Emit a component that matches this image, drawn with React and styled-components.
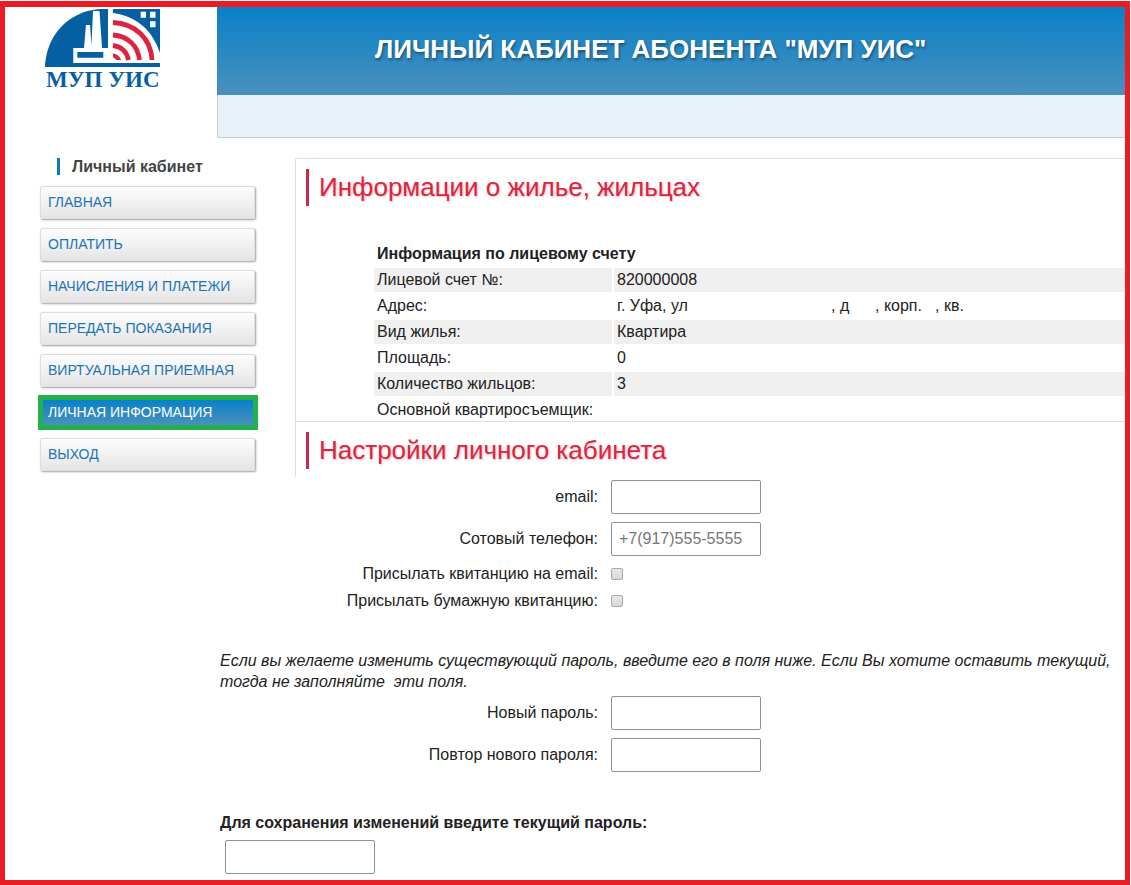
import React from "react";
import styled, { createGlobalStyle } from "styled-components";

const menu = [
  "Главная",
  "Оплатить",
  "Начисления и платежи",
  "Передать показания",
  "Виртуальная приемная",
  "Личная информация",
  "Выход",
];

const account = [
  ["Лицевой счет №:", "820000008"],
  ["Адрес:", ["г. Уфа, ул", ", д", ", корп.", ", кв."]],
  ["Вид жилья:", "Квартира"],
  ["Площадь:", "0"],
  ["Количество жильцов:", "3"],
  ["Основной квартиросъемщик:", ""],
];

function Logo() {
  return (
    <LogoImage viewBox="0 0 120 84" role="img" aria-label="МУП УИС">
      <path fill="#0560a2" d="M0 58C1 26 24 2 55 0h8v58z" />
      <path fill="#0560a2" d="M68 0h47v44C108 22 92 7 68 4z" />
      <path fill="#0560a2" d="M0 54h115v4H0z" />
      <path
        fill="#fff"
        d="M28.300 54V39H39l2-23h4l1.500 20L48 2h6.500l2.500 37h6v15zM32.300 43v5.700h26V43z"
        fillRule="evenodd"
      />
      <path
        fill="#fff"
        d="M63 0h5v54h-5zM95.700 2.700h5.300v6h-5.300zM105 2.700h5.500v6H105zM105 12.300h5.500v6H105z"
      />
      <g fill="none" stroke="#dc2440" strokeWidth="4.800">
        <path d="M68 13.500c22 1 38 16 39 37.500" />
        <path d="M68 26c15 1 25 11 26.500 25" />
        <path d="M68 36.500c8 1 14 6 15.500 14.500" />
      </g>
      <path fill="#dc2440" d="M68 44.500c4 .5 7 3 8 6.500h-4.500L68 48z" />
      <text x="1" y="78">
        МУП УИС
      </text>
    </LogoImage>
  );
}

function App() {
  return (
    <Frame>
      <GlobalStyle />
      <Header>
        <LogoCell>
          <Logo />
        </LogoCell>
        <Banner>
          <BannerTitle>ЛИЧНЫЙ КАБИНЕТ АБОНЕНТА "МУП УИС"</BannerTitle>
          <SubBar />
        </Banner>
      </Header>
      <Columns>
        <Sidebar>
          <SidebarTitle>Личный кабинет</SidebarTitle>
          {menu.map((item) => (
            <MenuLink href="#" key={item} $active={item === "Личная информация"}>
              {item}
            </MenuLink>
          ))}
        </Sidebar>
        <Content>
          <Panel>
            <PanelTitle>Информации о жилье, жильцах</PanelTitle>
            <AccountTable>
              <thead>
                <tr>
                  <th colSpan="2">Информация по лицевому счету</th>
                </tr>
              </thead>
              <tbody>
                {account.map(([name, value]) => (
                  <tr key={name}>
                    <td>{name}</td>
                    <td>
                      {Array.isArray(value) ? (
                        <Address>
                          {value.map((part) => (
                            <span key={part}>{part}</span>
                          ))}
                        </Address>
                      ) : (
                        value
                      )}
                    </td>
                  </tr>
                ))}
              </tbody>
            </AccountTable>
          </Panel>
          <Panel>
            <PanelTitle>Настройки личного кабинета</PanelTitle>
          </Panel>
        </Content>
      </Columns>
      <Form>
        <Field>
          <label htmlFor="email">email:</label>
          <Input id="email" type="text" />
        </Field>
        <Field>
          <label htmlFor="phone">Сотовый телефон:</label>
          <Input id="phone" type="text" placeholder="+7(917)555-5555" />
        </Field>
        <Checks>
          <CheckField>
            <label htmlFor="byEmail">Присылать квитанцию на email:</label>
            <Checkbox id="byEmail" />
          </CheckField>
          <CheckField>
            <label htmlFor="byPaper">Присылать бумажную квитанцию:</label>
            <Checkbox id="byPaper" />
          </CheckField>
        </Checks>
        <Note>
          Если вы желаете изменить существующий пароль, введите его в поля ниже.
          Если Вы хотите оставить текущий, тогда не заполняйте&nbsp; эти поля.
        </Note>
        <Field>
          <label htmlFor="newPassword">Новый пароль:</label>
          <Input id="newPassword" type="password" />
        </Field>
        <Field>
          <label htmlFor="repeatPassword">Повтор нового пароля:</label>
          <Input id="repeatPassword" type="password" />
        </Field>
        <Current>
          <label htmlFor="currentPassword">
            Для сохранения изменений введите текущий пароль:
          </label>
          <Input id="currentPassword" type="password" />
        </Current>
      </Form>
    </Frame>
  );
}

export default App;

const GlobalStyle = createGlobalStyle`
  * {
    box-sizing: border-box;
  }

  body {
    margin: 0;
    background: #fff;
    color: #222;
    font: 16px/20px "Liberation Sans", Arial, sans-serif;
  }
`;

const Frame = styled.div`
  margin: 1px 1px 0 0;
  border: 5px solid #ec1c24;
  border-top-width: 6px;
`;

const Header = styled.header`
  display: flex;
`;

const LogoCell = styled.div`
  width: 212px;
  flex-shrink: 0;
  padding: 2px 0 0 40px;
`;

const LogoImage = styled.svg`
  display: block;
  width: 120px;
  height: 84px;

  text {
    fill: #0560a2;
    font: bold 23px "Liberation Serif", serif;
  }
`;

const Banner = styled.div`
  flex: 1;
`;

const BannerTitle = styled.h1`
  margin: 0;
  padding-left: 158px;
  background: linear-gradient(#0881c8, #4a90bd);
  color: #fff;
  font-size: 26px;
  line-height: 84px;
  height: 88px;
  text-shadow: 1px 2px 3px rgba(0, 0, 0, 0.4);
`;

const SubBar = styled.div`
  height: 43px;
  border: solid #c3ced4;
  border-width: 0 0 1px 1px;
  border-bottom-left-radius: 2px;
  background: #e9f1f8;
`;

const Columns = styled.div`
  display: flex;
  padding: 20px 0 0 35px;
`;

const Sidebar = styled.nav`
  width: 215px;
  flex-shrink: 0;
  margin-right: 40px;
`;

const SidebarTitle = styled.h2`
  margin: 0 0 11px 17px;
  padding-left: 12px;
  border-left: 3px solid #0f7bbd;
  color: #444;
  font-size: 16px;
  line-height: 17px;
`;

const MenuLink = styled.a`
  display: block;
  height: ${(p) => (p.$active ? "35px" : "33px")};
  margin: ${(p) => (p.$active ? "-1px -3px 8px -2px" : "0 0 9px")};
  padding-left: ${(p) => (p.$active ? "5px" : "7px")};
  border: ${(p) => (p.$active ? "5px solid #22b14c" : "1px solid #dedede")};
  border-radius: ${(p) => (p.$active ? "0" : "2px")};
  background: ${(p) =>
    p.$active
      ? "linear-gradient(#0881c8, #4a90bd)"
      : "linear-gradient(#fdfdfd, #e6e5e6)"};
  box-shadow: ${(p) => (p.$active ? "none" : "1px 1px 2px rgba(80, 60, 70, 0.5)")};
  color: ${(p) => (p.$active ? "#fff" : "#1b74b5")};
  font-size: 14px;
  line-height: ${(p) => (p.$active ? "25px" : "31px")};
  text-decoration: none;
  text-transform: uppercase;
`;

const Content = styled.main`
  flex: 1;
  min-width: 0;
`;

const Panel = styled.section`
  margin-bottom: 2px;
  padding: 10px 0 0 10px;
  border: solid #dfdfdf;
  border-width: 1px 0 0 1px;
  border-top-left-radius: 2px;

  &:last-child {
    margin-bottom: 0;
    padding-bottom: 8px;
  }
`;

const PanelTitle = styled.h2`
  margin: 0;
  padding-left: 10px;
  border-left: 3px solid #cc2945;
  color: #dc2440;
  font-size: 26px;
  font-weight: normal;
  line-height: 37px;
  text-shadow: 1px 1px 2px rgba(200, 40, 70, 0.3);
`;

const AccountTable = styled.table`
  width: calc(100% - 64px);
  margin: 34px 0 -5px 66px;
  border-spacing: 2px;

  th,
  td {
    height: 24px;
    padding: 2px 3px;
    text-align: left;
  }

  td:first-child {
    width: 238px;
  }

  tbody tr:nth-child(odd) td {
    background: #f0f0f0;
  }
`;

const Address = styled.div`
  display: grid;
  grid-template-columns: 214px 44px 60px auto;
`;

const Form = styled.form`
  padding: 0 10px 6px 215px;
`;

const Field = styled.div`
  display: grid;
  grid-template-columns: 378px auto;
  column-gap: 13px;
  align-items: center;
  justify-content: start;
  margin-bottom: 8px;

  label {
    text-align: right;
  }
`;

const Input = styled.input`
  display: block;
  width: 150px;
  height: 34px;
  padding: 0 7px;
  border: 1px solid #8e8e96;
  border-radius: 2px;
  background: #fff;
  font: inherit;

  &::placeholder {
    color: #777;
  }
`;

const Checks = styled.div`
  margin: -4px 0 36px;
`;

const CheckField = styled(Field)`
  height: 27px;
  margin: 0;
`;

const Checkbox = styled.input.attrs({ type: "checkbox" })`
  appearance: none;
  width: 12px;
  height: 12px;
  margin: 0;
  border: 1px solid #a9a9a9;
  border-radius: 2px;
  background: linear-gradient(#e8e8e8, #d8d8d8);

  &:checked {
    background: #0f7bbd;
  }
`;

const Note = styled.p`
  margin: 0 0 4px;
  font-style: italic;
  line-height: 21px;
`;

const Current = styled.div`
  margin-top: 40px;

  label {
    display: block;
    font-weight: bold;
    line-height: 21px;
  }

  input {
    margin: 7px 0 0 5px;
  }
`;
